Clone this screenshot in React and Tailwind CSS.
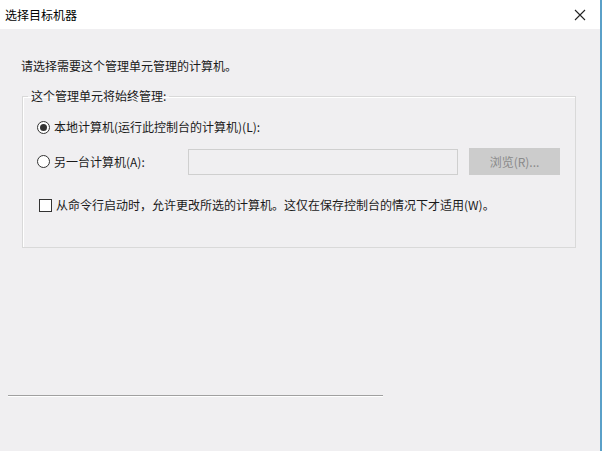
import React from "react";

const font = { fontFamily: '"Microsoft YaHei", "Noto Sans CJK SC", sans-serif' };

export default function App() {
  return (
    <div
      className="w-[602px] h-[451px] flex flex-col bg-[#f0eff1] text-[12px] text-[#1a1a1a] border-r-2 border-[#5aa0c8] overflow-hidden"
      style={font}
    >
      {/* title bar */}
      <div className="h-[29px] bg-white flex items-center justify-between pl-[5px] pr-[14px] shrink-0">
        <span className="text-[12px] text-black">选择目标机器</span>
        <svg width="12" height="12" viewBox="0 0 12 12" stroke="#222" strokeWidth="1.1" fill="none">
          <path d="M1 1l10 10M11 1L1 11" />
        </svg>
      </div>

      <div className="flex-1 flex flex-col pl-[21px] pt-[28px]">
        <p className="leading-[18px]">请选择需要这个管理单元管理的计算机。</p>

        {/* group box */}
        <fieldset className="mt-[14px] ml-px w-[554px] h-[159px] border border-[#d9d9d9] shadow-[inset_1px_1px_0_#fff] pl-[14px] pr-[15px] pt-[15px]">
          <legend className="px-[3px] -ml-[9px] leading-[14px]">这个管理单元将始终管理:</legend>

          <label className="flex items-center gap-[4px] h-[18px]">
            <span className="w-[13px] h-[13px] rounded-full border border-[#333] bg-white flex items-center justify-center">
              <span className="w-[7px] h-[7px] rounded-full bg-[#333]" />
            </span>
            本地计算机(运行此控制台的计算机)(L):
          </label>

          <div className="flex items-center mt-[12px]">
            <label className="flex items-center gap-[4px] w-[151px]">
              <span className="w-[13px] h-[13px] rounded-full border border-[#333] bg-white" />
              另一台计算机(A):
            </label>
            <div className="w-[270px] h-[26px] border border-[#cfcfcf] bg-[#f0eff1]" />
            <div className="ml-[11px] w-[91px] h-[27px] bg-[#cccccc] flex items-center justify-center text-[#8a8a8a]">
              浏览(R)...
            </div>
          </div>

          <label className="flex items-center gap-[4px] mt-[21px] ml-[2px]">
            <span className="w-[13px] h-[13px] border border-[#333] bg-white" />
            从命令行启动时，允许更改所选的计算机。这仅在保存控制台的情况下才适用(W)。
          </label>
        </fieldset>

        {/* etched separator */}
        <div className="mt-[147px] -ml-[13px] w-[375px] border-t border-[#a0a0a0] border-b border-b-white" />
      </div>
    </div>
  );
}
